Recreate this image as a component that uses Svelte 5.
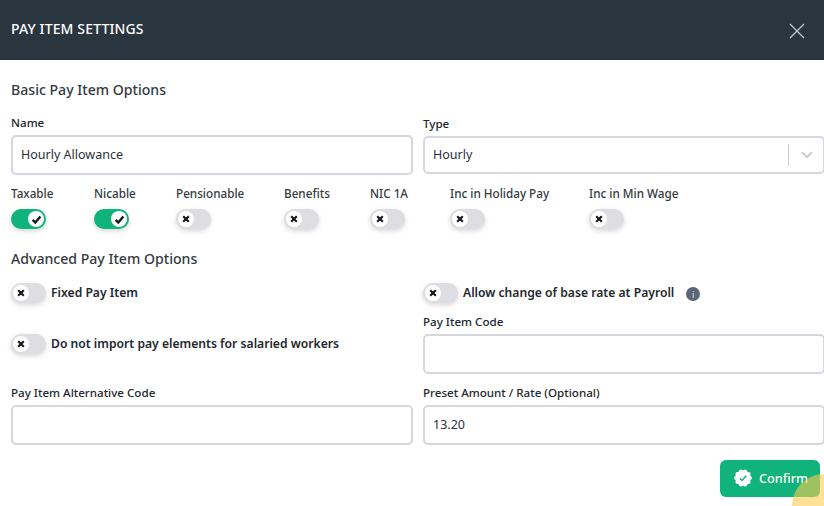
<script lang="ts">
  // Pay item settings modal: one header bar, two option groups and a confirm action.
  const basicToggles = [
    { label: "Taxable", on: true },
    { label: "Nicable", on: true },
    { label: "Pensionable", on: false },
    { label: "Benefits", on: false },
    { label: "NIC 1A", on: false },
    { label: "Inc in Holiday Pay", on: false },
    { label: "Inc in Min Wage", on: false }
  ];
  // Scallops of the badge behind the confirm tick.
  const scallops = Array.from({ length: 10 }, (_, i) => {
    const angle = (i / 10) * Math.PI * 2;
    return { cx: 9 + Math.cos(angle) * 6.9, cy: 9 + Math.sin(angle) * 6.9 };
  });
</script>

{#snippet toggle(on: boolean)}
  <span class="toggle" class:on>
    <span class="knob">
      {#if on}
        <svg viewBox="0 0 12 12" width="11" height="11" aria-hidden="true">
          <path d="M1.8 6.4 L4.7 9.3 L10.2 2.8" fill="none" stroke="#15191e" stroke-width="2.6" />
        </svg>
      {:else}
        <svg viewBox="0 0 10 10" width="8" height="8" aria-hidden="true">
          <path d="M1.5 1.5 L8.5 8.5 M8.5 1.5 L1.5 8.5" fill="none" stroke="#15191e" stroke-width="2.7" />
        </svg>
      {/if}
    </span>
  </span>
{/snippet}

<div class="modal">
  <header class="bar">
    <h1>PAY ITEM SETTINGS</h1>
    <button class="close" type="button" aria-label="Close">
      <svg viewBox="0 0 16 16" width="16" height="16" aria-hidden="true">
        <path d="M1 1 L15 15 M15 1 L1 15" fill="none" stroke="#c3c8cb" stroke-width="1.3" />
      </svg>
    </button>
  </header>

  <main class="body">
    <h2 class="basic-title">Basic Pay Item Options</h2>
    <div class="cols top">
      <div class="field">
        <span class="label">Name</span>
        <div class="input">Hourly Allowance</div>
      </div>
      <div class="field type">
        <span class="label">Type</span>
        <div class="input select">
          <span>Hourly</span>
          <span class="sep"></span>
          <svg viewBox="0 0 12 8" width="12" height="8" aria-hidden="true">
            <path d="M1 1.2 L6 6 L11 1.2" fill="none" stroke="#cdcdd0" stroke-width="2" />
          </svg>
        </div>
      </div>
    </div>

    <div class="toggles">
      {#each basicToggles as item (item.label)}
        <div class="toggle-cell">
          <span class="label">{item.label}</span>
          {@render toggle(item.on)}
        </div>
      {/each}
    </div>

    <h2 class="adv-title">Advanced Pay Item Options</h2>
    <div class="cols">
      <div class="col">
        <div class="inline first">
          {@render toggle(false)}
          <span class="label">Fixed Pay Item</span>
        </div>
        <div class="inline second">
          {@render toggle(false)}
          <span class="label">Do not import pay elements for salaried workers</span>
        </div>
        <div class="field alt">
          <span class="label">Pay Item Alternative Code</span>
          <div class="input"></div>
        </div>
      </div>
      <div class="col">
        <div class="inline first">
          {@render toggle(false)}
          <span class="label">Allow change of base rate at Payroll</span>
          <span class="info">i</span>
        </div>
        <div class="field code">
          <span class="label">Pay Item Code</span>
          <div class="input"></div>
        </div>
        <div class="field preset">
          <span class="label">Preset Amount / Rate (Optional)</span>
          <div class="input">13.20</div>
        </div>
      </div>
    </div>

    <div class="actions">
      <button class="confirm" type="button">
        <svg viewBox="0 0 18 18" width="18" height="18" aria-hidden="true">
          <circle cx="9" cy="9" r="7.8" fill="#fff" />
          {#each scallops as dot (dot.cx + dot.cy)}
            <circle cx={dot.cx} cy={dot.cy} r="2" fill="#fff" />
          {/each}
          <path d="M5.8 9.3 L8 11.5 L12.3 6.8" fill="none" stroke="#0fb37b" stroke-width="1.4" />
        </svg>
        <span>Confirm</span>
      </button>
    </div>
  </main>

  <span class="blob"></span>
</div>

<style>
  :global(body) {
    background: #fff;
  }

  .modal {
    position: relative;
    width: 824px;
    height: 506px;
    overflow: hidden;
    background: #fff;
    color: #2c3138;
    font-family: "Noto Sans", sans-serif;
  }

  .bar {
    display: flex;
    align-items: center;
    justify-content: space-between;
    height: 60px;
    padding: 0 19px 0 11px;
    box-sizing: border-box;
    background: #29353f;
  }

  h1 {
    margin: 0 0 3px;
    color: #fff;
    font-weight: 500;
    font-size: 14px;
    line-height: 18px;
    letter-spacing: 0.01em;
  }

  .close {
    display: flex;
    margin-top: 1px;
    padding: 0;
    border: 0;
    background: none;
  }

  .body {
    padding: 0 0 0 11px;
  }

  h2 {
    margin: 0;
    color: #343a42;
    font-weight: 500;
    font-size: 14.1px;
    line-height: 20px;
  }

  .basic-title {
    margin-top: 20px;
  }

  .adv-title {
    margin-top: 20px;
  }

  .label {
    color: #22272e;
    font-weight: 500;
    font-size: 11.6px;
    line-height: 16px;
    white-space: nowrap;
  }

  .cols {
    display: grid;
    grid-template-columns: 402px 402px;
    gap: 10px;
  }

  .top {
    margin-top: 15px;
  }

  .col,
  .field {
    display: flex;
    flex-direction: column;
  }

  .field {
    gap: 4px;
  }

  .input {
    display: flex;
    align-items: center;
    box-sizing: border-box;
    height: 40px;
    padding: 0 8px 2px;
    border: 2px solid #d6d6de;
    border-radius: 5px;
    background: #fff;
    color: #2c3138;
    font-size: 12.5px;
  }

  .type {
    padding-top: 1px;
  }

  .select {
    height: 38px;
    padding-right: 10px;
  }

  .sep {
    width: 1px;
    height: 22px;
    margin: 2px 12px 0 auto;
    background: #cdcdd0;
  }

  .select svg {
    margin-top: 2px;
  }

  .toggles {
    display: grid;
    grid-template-columns: 83px 82px 108px 86px 80px 139px auto;
    margin-top: 10px;
  }

  .toggle-cell {
    display: flex;
    flex-direction: column;
    align-items: flex-start;
    gap: 8px;
  }

  .toggle-cell .label {
    color: #343a42;
    font-size: 11.7px;
  }

  .toggle {
    display: flex;
    flex: none;
    align-items: center;
    box-sizing: border-box;
    width: 35px;
    height: 20px;
    padding: 0 2px;
    border-radius: 10px;
    background: #dddde2;
    box-shadow: 0 2px 5px rgb(0 0 0 / 16%);
  }

  .toggle.on {
    justify-content: flex-end;
    background: #0fb37b;
  }

  .knob {
    display: flex;
    align-items: center;
    justify-content: center;
    width: 16px;
    height: 16px;
    border-radius: 50%;
    background: #fff;
  }

  .inline {
    display: flex;
    gap: 5px;
    align-items: center;
    height: 20px;
  }

  .inline .label {
    font-weight: 600;
    font-size: 12.15px;
  }

  .first {
    margin-top: 14px;
  }

  .second {
    margin-top: 31px;
  }

  .alt {
    margin-top: 31px;
  }

  .code,
  .preset {
    margin-top: 11px;
  }

  .info {
    display: flex;
    align-items: center;
    justify-content: center;
    width: 14px;
    height: 14px;
    margin: 2px 0 0 7px;
    border-radius: 50%;
    background: #5d6779;
    color: #dfe2e6;
    font-size: 9px;
  }

  .actions {
    display: flex;
    justify-content: flex-end;
    margin-top: 15px;
    padding-right: 4px;
  }

  .confirm {
    display: flex;
    gap: 7px;
    align-items: center;
    box-sizing: border-box;
    width: 100px;
    height: 37px;
    padding: 0 0 2px 14px;
    border: 0;
    border-radius: 6px;
    background: #0fb37b;
    color: #fff;
    font: inherit;
    font-weight: 500;
    font-size: 12.7px;
  }

  .blob {
    position: absolute;
    right: -32px;
    bottom: -32px;
    width: 64px;
    height: 64px;
    border-radius: 50%;
    background: rgb(251 205 80 / 60%);
  }
</style>
